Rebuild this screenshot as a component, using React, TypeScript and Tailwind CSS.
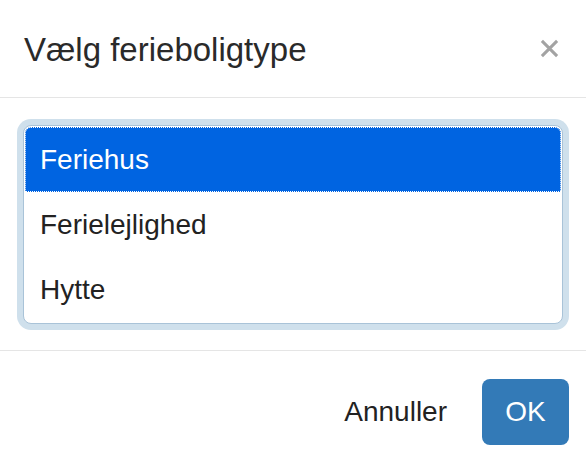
import { useState } from 'react'

const TYPER = ['Feriehus', 'Ferielejlighed', 'Hytte']

export default function App() {
  const [valgt, setValgt] = useState('Feriehus')

  return (
    <div className="h-[470px] w-[586px] overflow-hidden bg-white font-['Liberation_Sans',Arial,sans-serif] text-[#2a2a2a]">
      <div className="flex h-[98px] items-center justify-between border-b border-[#e5e5e5] pl-6 pr-[25px]">
        <h4 className="pt-[2px] text-[33px] leading-none">Vælg ferieboligtype</h4>
        <button type="button" aria-label="Luk" className="flex h-6 w-6 items-center justify-center text-[#a3a3a3]">
          <svg viewBox="0 0 20 20" className="h-[19px] w-[19px]" fill="none" stroke="currentColor" strokeWidth="3.2" strokeLinecap="butt">
            <path d="M2 2 L18 18 M18 2 L2 18" />
          </svg>
        </button>
      </div>

      <div className="px-[23px] pt-[27px] pb-[26px]">
        <div className="rounded-lg border border-[#a9c3d8] bg-white p-px shadow-[0_0_0_6px_#cfe0ec]">
          {TYPER.map((t) => (
            <div
              key={t}
              onClick={() => setValgt(t)}
              className={
                t === valgt
                  ? 'flex h-[65px] items-center rounded-t-md border border-dotted border-white bg-[#0064e1] pl-[14px] text-[28px] text-white'
                  : 'flex h-[65px] items-center pl-[15px] text-[28px] text-[#222]'
              }
            >
              {t}
            </div>
          ))}
        </div>
      </div>

      <div className="flex items-center justify-end gap-[35px] border-t border-[#e5e5e5] pt-[28px] pr-[17px]">
        <button type="button" className="text-[28px] text-[#222]">Annuller</button>
        <button type="button" className="flex h-[66px] w-[87px] items-center justify-center rounded-lg bg-[#337ab7] text-[28px] text-white">OK</button>
      </div>
    </div>
  )
}
